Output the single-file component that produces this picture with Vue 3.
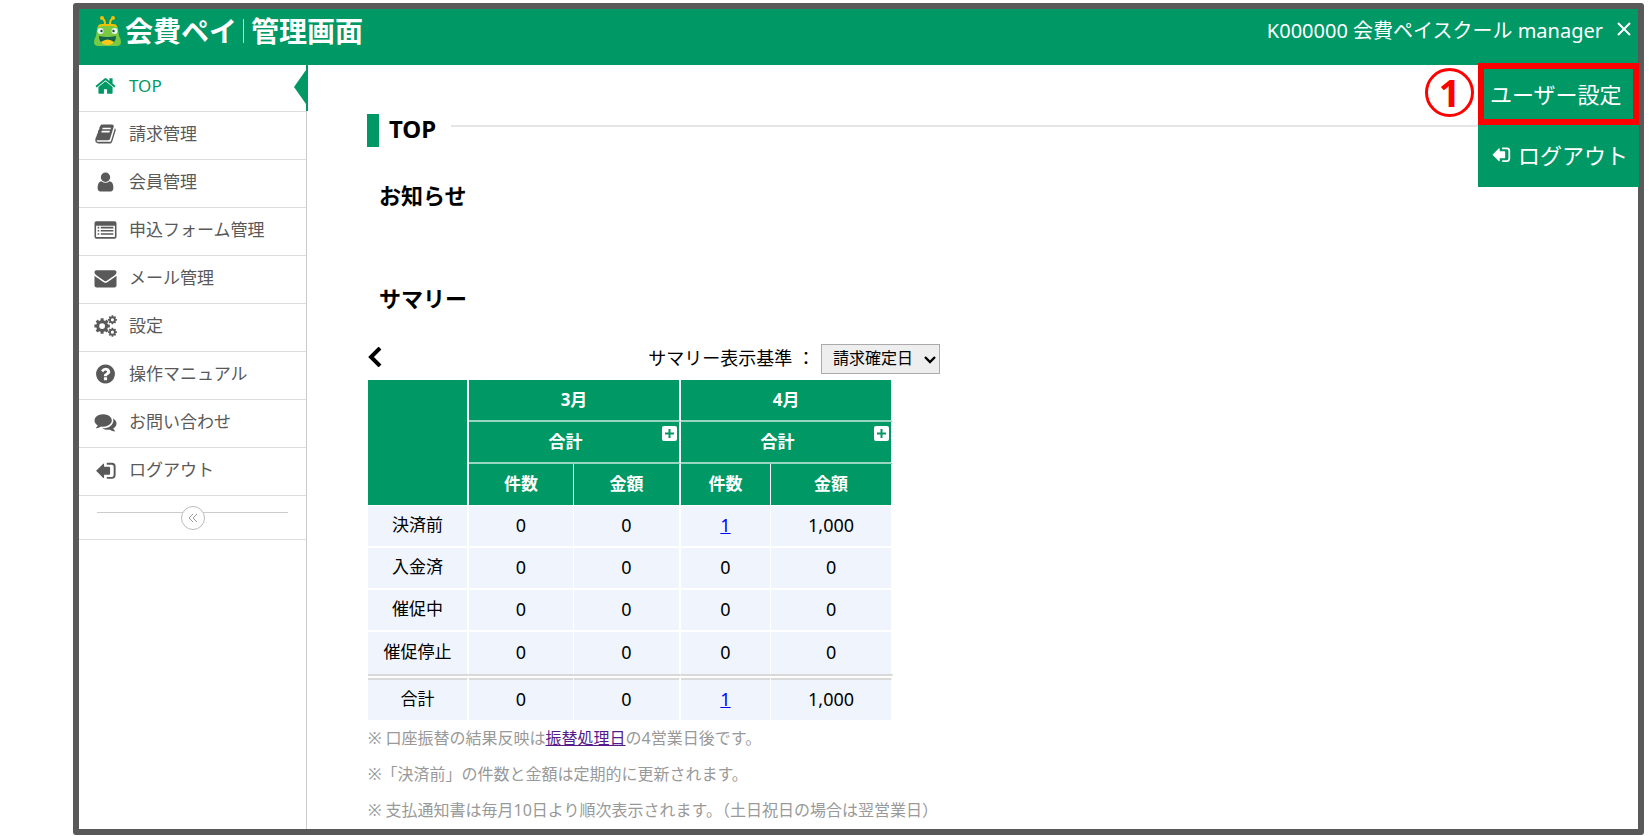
<script setup>
import { ref } from 'vue'

const gear = (cx, cy, r, hole, teeth) => {
  const pts = []
  const step = (Math.PI * 2) / teeth
  for (let i = 0; i < teeth; i++) {
    const a = i * step
    for (const [k, rad] of [[-0.32, 0.76], [-0.24, 1], [0.24, 1], [0.32, 0.76]]) {
      const t = a + k * step
      pts.push(`${(cx + Math.cos(t) * r * rad).toFixed(0)} ${(cy + Math.sin(t) * r * rad).toFixed(0)}`)
    }
  }
  return `M${pts.join('L')}zM${cx - hole} ${cy}a${hole} ${hole} 0 1 0 ${hole * 2} 0a${hole} ${hole} 0 1 0 ${-hole * 2} 0z`
}

const icons = {
  home: 'M1472 992v480q0 26-19 45t-45 19h-384v-384h-256v384h-384q-26 0-45-19t-19-45v-480q0-1 .5-3t.5-3l575-474 575 474q1 2 1 6zm223-69l-62 74q-8 9-21 11h-3q-13 0-21-7l-692-577-692 577q-12 8-24 7-13-2-21-11l-62-74q-8-10-7-23.5t11-21.5l719-599q32-26 76-26t76 26l244 204v-195q0-14 9-23t23-9h192q14 0 23 9t9 23v408l219 182q10 8 11 21.5t-7 23.5z',
  book: 'M1703 478q40 57 18 129l-275 906q-19 64-76.5 107.5t-122.5 43.5h-923q-77 0-148.5-53.5t-99.5-131.5q-24-67-2-127 0-4 3-27t4-37q1-8-3-21.5t-3-19.5q2-11 8-21t16.5-23.5 16.5-23.5q23-38 45-91.5t30-91.5q3-10 .5-30t-.5-28q3-11 17-28t17-23q21-36 42-92t25-90q1-9-2.5-32t.5-28q4-13 22-30.5t22-22.5q19-26 42.5-84.5t27.5-96.5q1-8-3-25.5t-2-26.5q2-8 9-18t18-23 17-21q8-12 16.5-30.5t15-35 16-36 19.5-32 26.5-23.5 36-11.5 47.5 5.5l-1 3q38-9 51-9h761q74 0 114 56t18 130l-274 906q-36 119-71.5 153.5t-128.5 34.5h-869q-27 0-38 15-11 16-1 43 24 70 144 70h923q29 0 56-15.5t35-41.5l300-987q7-22 5-57 38 15 59 43zm-1064 2q-4 13 2 22.5t20 9.5h608q13 0 25.5-9.5t16.5-22.5l21-64q4-13-2-22.5t-20-9.5h-608q-13 0-25.5 9.5t-16.5 22.5zm-83 256q-4 13 2 22.5t20 9.5h608q13 0 25.5-9.5t16.5-22.5l21-64q4-13-2-22.5t-20-9.5h-608q-13 0-25.5 9.5t-16.5 22.5z',
  user: 'M1536 1399q0 109-62.5 187t-150.5 78h-854q-88 0-150.5-78t-62.5-187q0-85 8.5-160.5t31.5-152 58.5-131 94-89 134.5-34.5q131 128 313 128t313-128q76 0 134.5 34.5t94 89 58.5 131 31.5 152 8.5 160.5zm-256-887q0 159-112.5 271.5t-271.5 112.5-271.5-112.5-112.5-271.5 112.5-271.5 271.5-112.5 271.5 112.5 112.5 271.5z',
  list: 'M160 192h1472q160 0 160 160v1088q0 160-160 160H160q-160 0-160-160V352q0-160 160-160zM128 544v880q0 48 48 48h1440q48 0 48-48V544zM256 640h128v128H256zM512 640h1024v128H512zM256 896h128v128H256zM512 896h1024v128H512zM256 1152h128v128H256zM512 1152h1024v128H512z',
  mail: 'M1792 710v794q0 66-47 113t-113 47h-1472q-66 0-113-47t-47-113v-794q44 49 101 87 362 246 497 345 57 42 92.5 65.5t94.5 48 110 24.5h2q51 0 110-24.5t94.5-48 92.5-65.5q170-123 498-345 57-39 100-87zm0-294q0 79-49 151t-122 123q-376 261-468 325-10 7-42.5 31t-54 38.5-52 32.5-57.5 27-50 9h-2q-23 0-50-9t-57.5-27-52-32.5-54-38.5-42.5-31q-91-64-262-182.5t-205-142.5q-62-42-117-115.5t-55-136.5q0-78 41.5-130t118.5-52h1472q65 0 112.5 47t47.5 113z',
  cogs: gear(620, 900, 640, 235, 8) + gear(1460, 390, 370, 130, 8) + gear(1460, 1400, 370, 130, 8),
  help: 'M1024 1376v-192q0-14-9-23t-23-9h-192q-14 0-23 9t-9 23v192q0 14 9 23t23 9h192q14 0 23-9t9-23zm256-672q0-88-55.5-163t-138.5-116-170-41q-243 0-371 213-15 24 8 42l132 100q7 6 19 6 16 0 25-12 53-68 86-92 34-24 86-24 48 0 85.5 26t37.5 59q0 38-20 61t-68 45q-63 28-115.5 86.5t-52.5 125.5v36q0 14 9 23t23 9h192q14 0 23-9t9-23q0-19 21.5-49.5t54.5-49.5q32-18 49-28.5t46-35 44.5-48 28-60.5 12.5-81zm384 192q0 209-103 385.5t-279.5 279.5-385.5 103-385.5-103-279.5-279.5-103-385.5 103-385.5 279.5-279.5 385.5-103 385.5 103 279.5 279.5 103 385.5z',
  chat: 'M1408 768q0 139-94 257t-256.5 186.5-353.5 68.5q-86 0-176-16-124 88-278 128-36 9-86 16h-3q-11 0-20.5-8t-11.5-21q-1-3-1-6.5t.5-6.5 2-6l2.5-5 3.5-5.5 4-5 4.5-5 4-4.5q5-6 23-25t26-29.5 22.5-29 25-38.5 20.5-44q-124-72-195-177t-71-224q0-139 94-257t256.5-186.5 353.5-68.5 353.5 68.5 256.5 186.5 94 257zm384 256q0 120-71 224.5t-195 176.5q10 24 20.5 44t25 38.5 22.5 29 26 29.5 23 25q1 1 4 4.5t4.5 5 4 5 3.5 5.5l2.5 5 2 6 .5 6.5-1 6.5q-3 14-13 22t-22 7q-50-7-86-16-154-40-278-128-90 16-176 16-271 0-472-132 58 4 88 4 161 0 309-45t264-129q125-92 192-212t67-254q0-77-23-152 129 71 204 178t75 230z',
  logout: 'M130 960L690 400q90-70 90 40v200h420q70 0 70 70v500q0 70-70 70H780v200q0 110-90 40zM1000 310h420q300 0 300 300v700q0 300-300 300h-420v-150h410q150 0 150-150V610q0-150-150-150h-410z'
}

const menu = [
  { icon: 'home', label: 'TOP', active: true },
  { icon: 'book', label: '請求管理' },
  { icon: 'user', label: '会員管理' },
  { icon: 'list', label: '申込フォーム管理' },
  { icon: 'mail', label: 'メール管理' },
  { icon: 'cogs', label: '設定' },
  { icon: 'help', label: '操作マニュアル' },
  { icon: 'chat', label: 'お問い合わせ' },
  { icon: 'logout', label: 'ログアウト' }
]

const months = ['3月', '4月']
const rows = [
  { name: '決済前', values: ['0', '0', '1', '1,000'] },
  { name: '入金済', values: ['0', '0', '0', '0'] },
  { name: '催促中', values: ['0', '0', '0', '0'] },
  { name: '催促停止', values: ['0', '0', '0', '0'] },
  { name: '合計', values: ['0', '0', '1', '1,000'], total: true }
]
const basis = ref('請求確定日')
</script>

<template>
  <div class="frame">
    <header class="header">
      <a class="logo" href="#">
        <svg class="mascot" viewBox="0 0 28 31" aria-hidden="true">
          <path d="M3 13q0-4 5-4h11q5 0 5 4l1 7q2 3 2 6 0 4-4 4H4q-4 0-4-4 0-3 2-6z" fill="#7ac943" />
          <path d="M5 11q0-2 3-2h11q3 0 3 2M9 3q2 1 2 6M18 3q-2 1-2 6" fill="none" stroke="#f2c200" stroke-width="2" />
          <circle cx="8" cy="2" r="2" fill="#f2c200" />
          <circle cx="19" cy="2" r="2" fill="#f2c200" />
          <circle cx="6.5" cy="15" r="3" fill="#e8f7ee" />
          <circle cx="20.500" cy="15" r="3" fill="#e8f7ee" />
          <circle cx="7.500" cy="15" r="1.200" fill="#164b3a" />
          <circle cx="19.500" cy="15" r="1.200" fill="#164b3a" />
          <path d="M5 20q8.500 2 17 0 0 6-4 7H9q-4-1-4-7z" fill="#12644b" />
          <path d="M7 26q6.500-5 13 0-2 3-6.500 3T7 26z" fill="#ffc91c" />
        </svg>
        <span class="brand">会費ペイ</span>
        <span class="bar"></span>
        <span class="brand">管理画面</span>
      </a>
      <div class="account">
        <span>K000000 会費ペイスクール manager</span>
        <button class="close" type="button" aria-label="閉じる">
          <svg viewBox="0 0 14 14"><path d="M1 1l12 12M13 1L1 13" stroke="#fff" stroke-width="2" /></svg>
        </button>
      </div>
      <div class="dropdown">
        <a class="drop-item picked" href="#">ユーザー設定</a>
        <a class="drop-item" href="#">
          <svg class="drop-icon" viewBox="0 0 1792 1792"><path :d="icons.logout" /></svg>ログアウト
        </a>
        <span class="step">1</span>
      </div>
    </header>

    <div class="body">
      <nav class="sidebar">
        <a v-for="item in menu" :key="item.label" class="nav-item" :class="{ active: item.active }" href="#">
          <svg class="nav-icon" viewBox="0 0 1792 1792"><path :d="icons[item.icon]" fill-rule="evenodd" /></svg>
          <span>{{ item.label }}</span>
        </a>
        <div class="collapse">
          <button class="collapse-button" type="button" aria-label="メニューを閉じる">
            <svg viewBox="0 0 10 10"><path d="M5 1L1 5l4 4M9 1L5 5l4 4" fill="none" stroke="#999" /></svg>
          </button>
        </div>
      </nav>

      <main class="main">
        <h1 class="title"><span>TOP</span></h1>
        <h2 class="section">お知らせ</h2>
        <h2 class="section summary">サマリー</h2>
        <div class="controls">
          <button class="prev" type="button" aria-label="前の月">
            <svg viewBox="0 0 16 20"><path d="M13 1L4 10l9 9" fill="none" stroke="#000" stroke-width="4" /></svg>
          </button>
          <div class="basis">
            <label for="basis">サマリー表示基準 ：</label>
            <span class="select-wrap">
              <select id="basis" v-model="basis"><option>請求確定日</option></select>
              <svg class="arrow" viewBox="0 0 12 8"><path d="M1 1l5 5 5-5" fill="none" stroke="#000" stroke-width="2.4" /></svg>
            </span>
          </div>
        </div>

        <table class="table">
          <colgroup><col class="c1"><col class="c2"><col class="c3"><col class="c4"><col class="c5"></colgroup>
          <thead>
            <tr>
              <th rowspan="3" class="wide"></th>
              <th v-for="m in months" :key="m" colspan="2" class="wide">{{ m }}</th>
            </tr>
            <tr>
              <th v-for="m in months" :key="m" colspan="2" class="wide">
                <div class="sum">
                  <span>合計</span>
                  <button class="plus" type="button" aria-label="展開">
                    <svg viewBox="0 0 15 15"><path d="M7.5 3v9M3 7.5h9" stroke="#009865" stroke-width="2" /></svg>
                  </button>
                </div>
              </th>
            </tr>
            <tr>
              <template v-for="m in months" :key="m"><th>件数</th><th class="wide">金額</th></template>
            </tr>
          </thead>
          <tbody>
            <tr v-for="row in rows" :key="row.name" :class="{ total: row.total }">
              <th scope="row" class="wide">{{ row.name }}</th>
              <td v-for="(v, i) in row.values" :key="i" :class="{ wide: i % 2 }">
                <a v-if="v === '1'" href="#">{{ v }}</a><template v-else>{{ v }}</template>
              </td>
            </tr>
          </tbody>
        </table>

        <p class="note">※ 口座振替の結果反映は<a href="#">振替処理日</a>の4営業日後です。</p>
        <p class="note">※「決済前」の件数と金額は定期的に更新されます。</p>
        <p class="note">※ 支払通知書は毎月10日より順次表示されます。（土日祝日の場合は翌営業日）</p>
      </main>
    </div>
  </div>
</template>

<style>
body { margin: 0; background: #fff; }
</style>

<style scoped>
* { box-sizing: border-box; }
.frame {
  display: flex;
  flex-direction: column;
  min-height: calc(100vh - 4px);
  margin: 3px 5px 0 73px;
  border: 6px solid #595959;
  border-radius: 3px;
  color: #000;
  font-family: "Noto Sans", "Noto Sans CJK JP", sans-serif;
}
button { padding: 0; border: 0; background: none; font: inherit; cursor: pointer; }
svg { display: block; }
.header {
  position: relative;
  display: flex;
  justify-content: space-between;
  height: 56px;
  padding: 0 7px 0 15px;
  background: #009865;
  color: #fff;
}
.logo { display: flex; align-items: center; height: 44px; color: #fff; text-decoration: none; }
.mascot { width: 28px; height: 31px; margin-right: 3px; }
.brand { font-size: 28px; font-weight: 700; line-height: 40px; }
.bar { width: 1px; height: 24px; margin: 0 7px 0 6px; background: #b3e0d1; }
.account { display: flex; align-items: center; gap: 14px; height: 40px; font-size: 20px; }
.close svg { width: 14px; height: 14px; }
.dropdown { position: absolute; z-index: 2; top: 54px; right: -1px; width: 161px; background: #009865; }
.drop-item {
  display: flex;
  align-items: center;
  height: 62px;
  padding: 0 0 4px 13px;
  color: #fff;
  font-size: 22px;
  text-decoration: none;
  white-space: nowrap;
}
.picked { padding: 0 0 2px 6px; border: 6px solid #f00; }
.drop-icon { width: 20px; height: 20px; margin-right: 7px; fill: #fff; }
.step {
  position: absolute;
  top: 5px;
  right: 165px;
  width: 49px;
  height: 49px;
  border: 3px solid #f00;
  border-radius: 50%;
  color: #f00;
  font-size: 38px;
  font-weight: 700;
  line-height: 43px;
  text-align: center;
}
.body { display: flex; flex: 1; }
.sidebar { flex: none; width: 228px; border-right: 1px solid #ccc; }
.nav-item {
  position: relative;
  display: flex;
  align-items: center;
  gap: 12px;
  height: 48px;
  padding: 0 0 4px 15px;
  border-bottom: 1px solid #ddd;
  color: #595959;
  font-size: 17px;
  text-decoration: none;
}
.nav-item span { padding-bottom: 2px; }
.nav-icon { width: 23px; height: 22px; fill: #595959; }
.active { height: 47px; color: #009865; }
.active .nav-icon { fill: #009865; }
.active::before {
  content: "";
  position: absolute;
  top: 0;
  right: -2px;
  width: 2px;
  height: 46px;
  background: #009865;
}
.active::after {
  content: "";
  position: absolute;
  top: 5px;
  right: 0;
  border: solid transparent;
  border-width: 17px 12px 17px 0;
  border-right-color: #009865;
}
.collapse {
  position: relative;
  display: flex;
  align-items: center;
  justify-content: center;
  height: 44px;
  border-bottom: 1px solid #ddd;
}
.collapse::before { content: ""; position: absolute; top: 16px; left: 18px; right: 18px; height: 1px; background: #ccc; }
.collapse-button {
  position: relative;
  display: grid;
  place-items: center;
  width: 24px;
  height: 24px;
  border: 1px solid #bbb;
  border-radius: 50%;
  background: #fff;
}
.collapse-button svg { width: 10px; height: 10px; }
.main { flex: 1; min-width: 0; padding: 49px 28px 0 60px; }
.title {
  display: flex;
  align-items: center;
  height: 33px;
  margin: 0;
  border-left: 12px solid #009865;
  padding-left: 10px;
  font-size: 24px;
  line-height: 30px;
}
.title span { padding-bottom: 4px; }
.title::after { content: ""; flex: 1; height: 2px; margin: 0 0 9px 15px; background: #e5e5e5; }
.section { margin: 32px 0 0 12px; font-size: 22px; line-height: 32px; }
.summary { margin-top: 71px; }
.controls { display: flex; align-items: center; justify-content: space-between; width: 573px; height: 30px; margin: 30px 0 6px; }
.prev { padding-bottom: 4px; }
.prev svg { width: 16px; height: 20px; }
.basis { display: flex; align-items: center; gap: 6px; font-size: 18px; white-space: nowrap; }
.basis label { padding-bottom: 4px; }
.select-wrap { position: relative; }
select {
  display: block;
  appearance: none;
  width: 119px;
  height: 30px;
  padding: 0 0 2px 11px;
  border: 1px solid #aaa;
  border-radius: 0;
  background: #eee;
  color: #000;
  font: inherit;
  font-size: 16px;
}
.arrow { position: absolute; top: 12px; right: 4px; width: 12px; height: 8px; pointer-events: none; }
.table { width: 525px; margin-left: 1px; border-spacing: 0; table-layout: fixed; font-size: 17px; text-align: center; }
.c1 { width: 101px; }
.c2 { width: 105px; }
.c3 { width: 107px; }
.c4 { width: 90px; }
.c5 { width: 122px; }
.table th, .table td {
  height: 42px;
  padding: 0 0 2px;
  border: 0 solid #fff;
  border-width: 0 1px 2px 0;
  background: #f0f5fd;
  background-clip: padding-box;
  line-height: 24px;
}
.table .wide { border-right-width: 2px; }
.table thead th { padding: 0; border-bottom-color: #99d6c1; background-color: #009865; color: #fff; }
.table thead th[rowspan], .table thead tr:last-child th { border-bottom: 1px solid #fff; }
.table thead tr:last-child th { padding-bottom: 2px; }
.table tbody th { font-weight: 400; }
.table td { font-size: 18px; }
.table td a { color: #00f; }
.table tr:nth-last-child(2) th, .table tr:nth-last-child(2) td { border-bottom-width: 0; }
.table thead tr:nth-last-child(2) th { border-bottom-width: 2px; }
.table .total th, .table .total td { height: 46px; border-top: 6px double #d9d9d9; border-bottom: 0; }
.sum { display: flex; height: 40px; align-items: center; }
.sum span { flex: 1; }
.plus { align-self: flex-start; width: 15px; height: 15px; margin: 4px 2px 0 0; border-radius: 2px; background: #fff; }
.note { margin: 0 0 0 1px; color: #999; font-size: 16px; line-height: 36px; }
.note a { color: #551a8b; }
</style>
